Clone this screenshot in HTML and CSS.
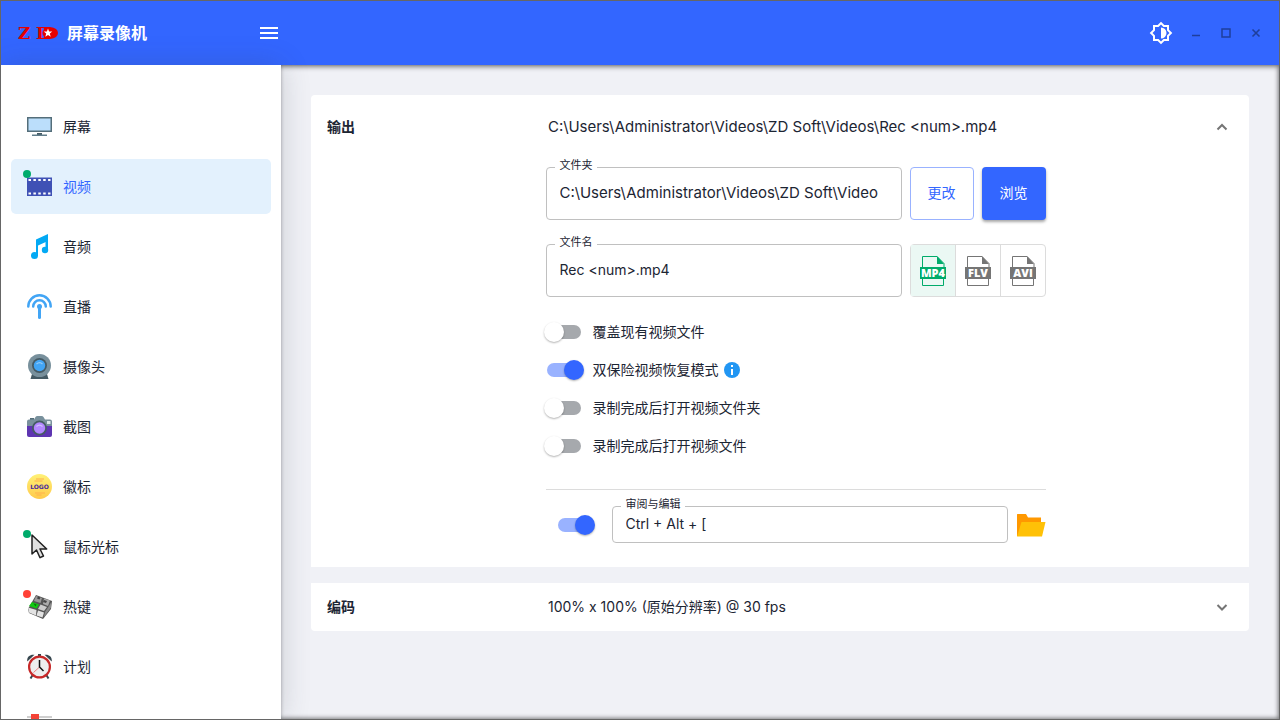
FILE: index.html
```html
<!DOCTYPE html>
<html lang="zh-CN">
<head>
    <meta charset="UTF-8">
    <title>ZD 屏幕录像机</title>
    <meta name="viewport" content="width=device-width, initial-scale=1">
    <link rel="stylesheet" href="styles.css">
</head>
<body>
    <div class="app">
        <header class="topbar">
            <div class="brand">
                <svg class="brand-logo" width="42" height="26" viewBox="0 0 42 26" aria-hidden="true">
                    <path d="M27 7h6q8 1 8 6t-8 6h-6z" fill="#e60000"/>
                    <text x="1" y="19" class="logo-text">Z</text>
                    <text x="19" y="19" class="logo-text">D</text>
                    <circle cx="30" cy="13" r="4.500" fill="#e60000"/>
                    <path d="M31 8.600l1.100 3h3.200l-2.500 2 .9 3.100-2.700-1.800-2.700 1.800.9-3.100-2.500-2h3.200z" fill="#fff"/>
                </svg>
                <h1>屏幕录像机</h1>
            </div>
            <button class="icon-btn menu-btn" aria-label="菜单">
                <svg width="24" height="24" viewBox="0 0 24 24" fill="#fff"><path d="M3 18h18v-2H3v2zm0-5h18v-2H3v2zm0-7v2h18V6H3z"/></svg>
            </button>
            <div class="window-actions">
                <button class="icon-btn theme-btn" aria-label="主题">
                    <svg width="24" height="24" viewBox="0 0 24 24" fill="#fff"><path d="M20 8.69V4h-4.69L12 .69 8.69 4H4v4.69L.69 12 4 15.31V20h4.69L12 23.31 15.31 20H20v-4.69L23.31 12 20 8.69zm-2 5.79V18h-3.52L12 20.48 9.52 18H6v-3.52L3.52 12 6 9.52V6h3.52L12 3.52 14.48 6H18v3.52L20.48 12 18 14.48z"/><path d="M12 17.5a5.5 5.5 0 0 0 0-11z"/></svg>
                </button>
                <button class="win-btn" aria-label="最小化"><svg width="10" height="10" viewBox="0 0 10 10"><path d="M1 7.500h8" stroke="#1f3f9c" stroke-width="1.500"/></svg></button>
                <button class="win-btn" aria-label="最大化"><svg width="10" height="10" viewBox="0 0 10 10"><path d="M1 1h8v8H1z" fill="none" stroke="#1f3f9c" stroke-width="1.5"/></svg></button>
                <button class="win-btn" aria-label="关闭"><svg width="10" height="10" viewBox="0 0 10 10"><path d="M1.5 1.5l7 7M8.5 1.5l-7 7" stroke="#1f3f9c" stroke-width="1.6"/></svg></button>
            </div>
        </header>

        <div class="body">
            <!-- Sidebar -->
            <nav class="sidebar">
                <a class="nav-item" href="#screen">
                    <span class="nav-icon">
                        <svg width="25" height="25" viewBox="0 0 25 25"><path d="M10 19h5v3h-5z" fill="#455a64"/><path d="M5 20.500h15V22H5z" fill="#607d8b"/><path d="M0 3h25v15H0z" fill="#546e7a"/><path d="M1.500 4.500h22v12h-22z" fill="#bbdefb"/></svg>
                    </span>
                    屏幕
                </a>
                <a class="nav-item active" href="#video">
                    <span class="nav-icon">
                        <svg width="25" height="25" viewBox="0 0 25 25"><path d="M0 3.500h25v18.500H0z" fill="#3f51b5"/><path d="M1.500 6h22M1.500 19.500h22" stroke="#fff" stroke-width="2" stroke-dasharray="2.500 2.400"/></svg>
                        <i class="badge green"></i>
                    </span>
                    视频
                </a>
                <a class="nav-item" href="#audio">
                    <span class="nav-icon">
                        <svg width="25" height="25" viewBox="0 0 25 25" fill="#03a9f4"><path d="M9 5.500L21 0v7L11 11.500V22H9z"/><circle cx="7.500" cy="21.500" r="3.500"/><path d="M18.500 4H21v12h-2.500z"/><circle cx="18" cy="16" r="3.200"/></svg>
                    </span>
                    音频
                </a>
                <a class="nav-item" href="#live">
                    <span class="nav-icon">
                        <svg width="25" height="25" viewBox="0 0 25 25" fill="none" stroke="#42a5f5" stroke-width="2.500" stroke-linecap="round"><path d="M1.300 12.500a11.200 11.200 0 0 1 22.400 0M6.200 12.500a6.300 6.300 0 0 1 12.600 0"/><path d="M12.500 13v10.500" stroke-width="3"/><circle cx="12.500" cy="12.500" r="2.500" fill="#42a5f5" stroke="none"/></svg>
                    </span>
                    直播
                </a>
                <a class="nav-item" href="#webcam">
                    <span class="nav-icon">
                        <svg width="25" height="25" viewBox="0 0 25 25"><path d="M5 20h15l1.500 5h-18z" fill="#455a64"/><circle cx="12.500" cy="11.500" r="11.500" fill="#78909c"/><circle cx="12.500" cy="11.500" r="7.500" fill="#455a64"/><circle cx="12.500" cy="11.500" r="5.700" fill="#42a5f5"/><path d="M9.500 10a4.500 4.500 0 0 1 6 0" fill="none" stroke="#90caf9" stroke-width="1.300"/></svg>
                    </span>
                    摄像头
                </a>
                <a class="nav-item" href="#snapshot">
                    <span class="nav-icon">
                        <svg width="25" height="25" viewBox="0 0 25 25"><path d="M3 4h4v2H3z" fill="#546e7a"/><path d="M0 13V7.500Q0 5.500 2 5.500h5L8.500 3q.5-1 2-1h4q1.500 0 2 1L18 5.500h5q2 0 2 2V13z" fill="#78909c"/><path d="M0 12h25v9q0 2-2 2H2q-2 0-2-2z" fill="#5e35b1"/><circle cx="12.500" cy="14" r="7.500" fill="#455a64"/><circle cx="12.500" cy="14" r="5.700" fill="#b388ff"/><path d="M9.500 12.500a4.500 4.500 0 0 1 6 0" fill="none" stroke="#d1bfff" stroke-width="1.300"/><path d="M20 7h3.500v3H20z" fill="#dce7ea"/></svg>
                    </span>
                    截图
                </a>
                <a class="nav-item" href="#logo">
                    <span class="nav-icon">
                        <svg width="25" height="25" viewBox="0 0 25 25"><defs><linearGradient id="gold" x2="0" y2="1"><stop stop-color="#fff176"/><stop offset="1" stop-color="#ffca4b"/></linearGradient></defs><circle cx="12.500" cy="12.500" r="12.500" fill="url(#gold)"/><path d="M9 5h8M7.500 7h8M8 19h10M9.500 21h5" stroke="#ffb04c" stroke-width="1.200"/><text x="12.500" y="15" text-anchor="middle" class="logo-word">LOGO</text></svg>
                    </span>
                    徽标
                </a>
                <a class="nav-item" href="#cursor">
                    <span class="nav-icon">
                        <svg width="25" height="25" viewBox="0 0 25 25"><path d="M5 1v19l4.500-4 3.500 7.700 3.500-1.700-3.500-7h6.700z" fill="#e0e0e0" stroke="#212121" stroke-width="1.500" stroke-linejoin="round"/></svg>
                        <i class="badge green"></i>
                    </span>
                    鼠标光标
                </a>
                <a class="nav-item" href="#hotkey">
                    <span class="nav-icon">
                        <svg width="25" height="25" viewBox="0 0 25 25"><path d="M1 15L9 1l16 6-1 8-8 10L2 19z" fill="#555"/><path d="M9 2l6 2-1.500 5L7 7z" fill="#999"/><path d="M17 4.500l6 2L21 12l-5-2z" fill="#aaa"/><path d="M11 2.500l2.500 1-1 2-2.500-1z" fill="#444"/><path d="M17 6l3 1-1 2-3-1z" fill="#444"/><path d="M5 8l7 2.500-2.500 4-7.500-2.500z" fill="#11c811"/><path d="M6.500 9.500l3 1-1 2z" fill="#087408"/><path d="M13.500 10.500l6.500 2.500-3 4-6-2z" fill="#ccc"/><path d="M1 13.500L9.500 16l-.5 5.500-7-3zM11 16.500l6 2-1.500 5-6-2z" fill="#e2e2e2"/><path d="M21 13.500l3-5v5L17 23l1-5z" fill="#8a8a8a"/></svg>
                        <i class="badge red"></i>
                    </span>
                    热键
                </a>
                <a class="nav-item" href="#schedule">
                    <span class="nav-icon">
                        <svg width="25" height="25" viewBox="0 0 25 25"><path d="M6 20.500L3.500 24.500M19 20.500l2.500 4" stroke="#37474f" stroke-width="2"/><path d="M.3 7.500C-.5 3 3 0 7.500.8zM24.700 7.500C25.500 3 22 0 17.500.8z" fill="#37474f"/><path d="M11 0h3v3h-3z" fill="#37474f"/><circle cx="12.500" cy="13" r="10.400" fill="#eee" stroke="#c62828" stroke-width="2.200"/><path d="M12.500 13l-6 5.500" stroke="#f08080"/><path d="M12.500 6v7l4 4" fill="none" stroke="#111" stroke-width="1.500"/></svg>
                    </span>
                    计划
                </a>
                <a class="nav-item" href="#options" aria-label="选项">
                    <span class="nav-icon">
                        <svg width="25" height="25" viewBox="0 0 25 25"><path d="M0 3h25M0 12.500h25M0 22h25" stroke="#cfcfcf" stroke-width="2"/><path d="M4 0h8v6H4zM14 9.500h8v6h-8zM4 19h8v6H4z" fill="#f44336"/></svg>
                    </span>
                </a>
            </nav>

            <!-- Settings -->
            <main class="content">
                <section class="panel">
                    <button class="panel-head expanded" aria-expanded="true">
                        <span class="panel-title">输出</span>
                        <span class="panel-summary path">C:\Users\Administrator\Videos\ZD Soft\Videos\Rec &lt;num&gt;.mp4</span>
                        <svg class="chevron" width="20" height="20" viewBox="0 0 20 20"><path d="M4.500 12.500l4.500-4.500 4.500 4.500"/></svg>
                    </button>
                    <div class="panel-body">
                        <div class="form">
                            <div class="form-row">
                                <div class="field">
                                    <label for="folder">文件夹</label>
                                    <input type="text" class="path" id="folder" value="C:\Users\Administrator\Videos\ZD Soft\Video" readonly>
                                </div>
                                <button class="btn outlined">更改</button>
                                <button class="btn primary">浏览</button>
                            </div>
                            <div class="form-row">
                                <div class="field">
                                    <label for="filename">文件名</label>
                                    <input type="text" id="filename" value="Rec &lt;num&gt;.mp4">
                                </div>
                                <div class="formats">
                                    <button class="format selected" aria-label="MP4" aria-pressed="true">
                                        <svg width="30" height="30" viewBox="0 0 30 30"><path d="M4.500 11V.5H19l7 7V11M4.500 23v6.500h21V23" fill="none" stroke="currentColor"/><path d="M19 0v8h7z" fill="currentColor"/><path d="M2 11h26v12H2z" fill="currentColor"/><text x="15" y="21" text-anchor="middle" class="format-name">MP4</text></svg>
                                    </button>
                                    <button class="format" aria-label="FLV" aria-pressed="false">
                                        <svg width="30" height="30" viewBox="0 0 30 30"><path d="M4.500 11V.5H19l7 7V11M4.500 23v6.500h21V23" fill="none" stroke="currentColor"/><path d="M19 0v8h7z" fill="currentColor"/><path d="M2 11h26v12H2z" fill="currentColor"/><text x="15" y="21" text-anchor="middle" class="format-name">FLV</text></svg>
                                    </button>
                                    <button class="format" aria-label="AVI" aria-pressed="false">
                                        <svg width="30" height="30" viewBox="0 0 30 30"><path d="M4.500 11V.5H19l7 7V11M4.500 23v6.500h21V23" fill="none" stroke="currentColor"/><path d="M19 0v8h7z" fill="currentColor"/><path d="M2 11h26v12H2z" fill="currentColor"/><text x="15" y="21" text-anchor="middle" class="format-name">AVI</text></svg>
                                    </button>
                                </div>
                            </div>
                            <div class="switches">
                                <label class="switch-row"><input type="checkbox" class="switch">覆盖现有视频文件</label>
                                <label class="switch-row">
                                    <input type="checkbox" class="switch" checked>双保险视频恢复模式
                                    <svg class="info" width="16" height="16" viewBox="0 0 16 16"><circle cx="8" cy="8" r="8" fill="#2196f3"/><path d="M7 3h2v2H7zM7 7h2v6H7z" fill="#fff"/></svg>
                                </label>
                                <label class="switch-row"><input type="checkbox" class="switch">录制完成后打开视频文件夹</label>
                                <label class="switch-row"><input type="checkbox" class="switch">录制完成后打开视频文件</label>
                            </div>
                            <div class="hotkey-row">
                                <input type="checkbox" class="switch" aria-label="启用热键" checked>
                                <div class="field small">
                                    <label for="review">审阅与编辑</label>
                                    <input type="text" id="review" value="Ctrl + Alt + [">
                                </div>
                                <button class="icon-btn" aria-label="打开文件夹">
                                    <svg width="30" height="30" viewBox="0 0 30 30"><path d="M1 4.500Q1 4 1.500 4H10l2 3.500h13v6L4 26H1z" fill="#ff9800"/><path d="M5.500 12H29.500L26 26.500H1z" fill="#ffc107"/></svg>
                                </button>
                            </div>
                        </div>
                    </div>
                </section>

                <section class="panel">
                    <button class="panel-head" aria-expanded="false">
                        <span class="panel-title">编码</span>
                        <span class="panel-summary">100% x 100% (原始分辨率) @ 30 fps</span>
                        <svg class="chevron" width="20" height="20" viewBox="0 0 20 20"><path d="M4.500 8l4.500 4.500 4.500-4.500"/></svg>
                    </button>
                </section>
            </main>
        </div>
    </div>
</body>
</html>
```

FILE: styles.css
```css
/* Reset & Base Styles */
* {
    box-sizing: border-box;
    margin: 0;
    padding: 0;
}
body {
    font-family: Inter, "Noto Sans CJK SC", sans-serif;
    font-size: 14px;
    line-height: 20px;
    color: #1c2533;
}
button, input {
    font: inherit;
    color: inherit;
}
button {
    background: none;
    border: none;
    cursor: pointer;
}
svg {
    display: block;
    flex-shrink: 0;
}
.app {
    height: 100vh;
    display: flex;
    flex-direction: column;
    border: 1px solid #666;
    overflow: hidden;
}
/* Top bar */
.topbar {
    height: 64px;
    flex-shrink: 0;
    display: flex;
    align-items: center;
    background-color: #3366ff;
    box-shadow: 0 2px 5px rgba(0,0,0,0.4);
    position: relative;
    z-index: 1;
}
.brand {
    width: 256px;
    display: flex;
    align-items: center;
    gap: 8px;
    padding-left: 16px;
}
.brand h1 {
    font-size: 16px;
    font-weight: bold;
    color: #fff;
}
.logo-text {
    font-family: "DejaVu Serif", serif;
    font-weight: bold;
    font-size: 17px;
    fill: #e60000;
}
.icon-btn {
    display: flex;
}
.window-actions {
    display: flex;
    align-items: center;
    margin-left: auto;
    padding-right: 8px;
}
.theme-btn {
    margin-right: 8px;
}
.win-btn {
    width: 30px;
    height: 30px;
    display: flex;
    align-items: center;
    justify-content: center;
}
/* Sidebar */
.body {
    flex: 1;
    min-height: 0;
    display: flex;
}
.sidebar {
    width: 280px;
    flex-shrink: 0;
    display: flex;
    flex-direction: column;
    gap: 5px;
    padding: 34px 10px 0;
    background-color: #fff;
    box-shadow: 0 0 28px rgba(50,60,70,0.2);
    overflow: hidden;
    position: relative;
    z-index: 2;
}
.nav-item {
    height: 55px;
    flex-shrink: 0;
    display: flex;
    align-items: center;
    gap: 11px;
    padding: 0 16px;
    border-radius: 5px;
    color: inherit;
    text-decoration: none;
}
.nav-item.active {
    background-color: #e3f1fd;
    color: #3366ff;
}
.nav-icon {
    position: relative;
}
.badge {
    position: absolute;
    top: -4px;
    left: -4px;
    width: 8px;
    height: 8px;
    border-radius: 50%;
}
.badge.green {
    background-color: #00ab6b;
}
.badge.red {
    background-color: #ff4136;
}
.logo-word {
    font-family: "DejaVu Sans", sans-serif;
    font-weight: bold;
    font-size: 6px;
    fill: #4527a0;
}
/* Content */
.content {
    flex: 1;
    min-width: 0;
    display: flex;
    flex-direction: column;
    gap: 16px;
    padding: 30px;
    background-color: #f0f1f6;
    box-shadow: inset -1px -1px 4px rgba(0,0,0,0.5);
}
.panel {
    background-color: #fff;
}
.panel:first-child {
    border-radius: 4px 4px 0 0;
}
.panel:last-child {
    border-radius: 0 0 4px 4px;
}
.panel-head {
    width: 100%;
    min-height: 48px;
    display: flex;
    align-items: center;
    padding: 0 16px;
    text-align: left;
}
.panel-head.expanded {
    min-height: 64px;
}
.panel-title {
    flex: 0 0 221px;
    font-weight: bold;
}
.panel-summary {
    flex: 1;
}
.path {
    font-size: 15px;
}
.chevron {
    fill: none;
    stroke: #757575;
    stroke-width: 2;
}
.panel-body {
    padding: 8px 16px 24px 25%;
}
/* Form */
.form {
    max-width: 500px;
}
.form-row {
    display: flex;
    gap: 8px;
    margin-bottom: 24px;
}
.field {
    flex: 1;
    min-width: 0;
    position: relative;
}
.field label {
    position: absolute;
    top: -10px;
    left: 9px;
    padding: 0 4px 0 5px;
    font-size: 11px;
    line-height: 16px;
    background-color: #fff;
}
.field input {
    display: block;
    width: 100%;
    height: 53px;
    padding: 0 13px 2px;
    border: 1px solid #c0c0c0;
    border-radius: 4px;
    background: none;
    outline: none;
}
.field.small input {
    height: 37px;
}
.btn {
    width: 64px;
    height: 53px;
    padding-bottom: 2px;
    border-radius: 4px;
}
.btn.outlined {
    border: 1px solid #99b2ff;
    color: #3366ff;
}
.btn.primary {
    background-color: #3366ff;
    color: #fff;
    box-shadow: 0 2px 3px rgba(0,0,0,0.35);
}
.formats {
    width: 136px;
    display: flex;
    border: 1px solid #dcdcdc;
    border-radius: 4px;
}
.format {
    flex: 1;
    display: flex;
    align-items: center;
    justify-content: center;
    color: #757575;
}
.format + .format {
    border-left: 1px solid #dcdcdc;
}
.format.selected {
    background-color: #ebf8f4;
    color: #00ab6b;
}
.format-name {
    font-family: "Open Sans", sans-serif;
    font-weight: 800;
    font-size: 11px;
    fill: #fff;
}
/* Switches */
.switches {
    margin-top: -8px;
    margin-bottom: 24px;
}
.switch-row {
    height: 38px;
    display: flex;
    align-items: center;
}
.switch-row .switch {
    margin: 0 12px 0 1px;
}
.switch {
    appearance: none;
    width: 34px;
    height: 14px;
    flex-shrink: 0;
    border-radius: 7px;
    background-color: #a6a9ad;
    position: relative;
    cursor: pointer;
}
.switch::before {
    content: "";
    position: absolute;
    top: -3px;
    left: -3px;
    width: 20px;
    height: 20px;
    border-radius: 50%;
    background-color: #fff;
    box-shadow: 0 1px 2px rgba(0,0,0,0.3);
}
.switch:checked {
    background-color: #99b2ff;
}
.switch:checked::before {
    left: 17px;
    background-color: #3366ff;
}
.info {
    margin-left: 5px;
}
.hotkey-row {
    display: flex;
    align-items: center;
    gap: 8px;
    padding-top: 16px;
    border-top: 1px solid #dcdcdc;
}
.hotkey-row .switch {
    margin: 0 12px;
}
```
